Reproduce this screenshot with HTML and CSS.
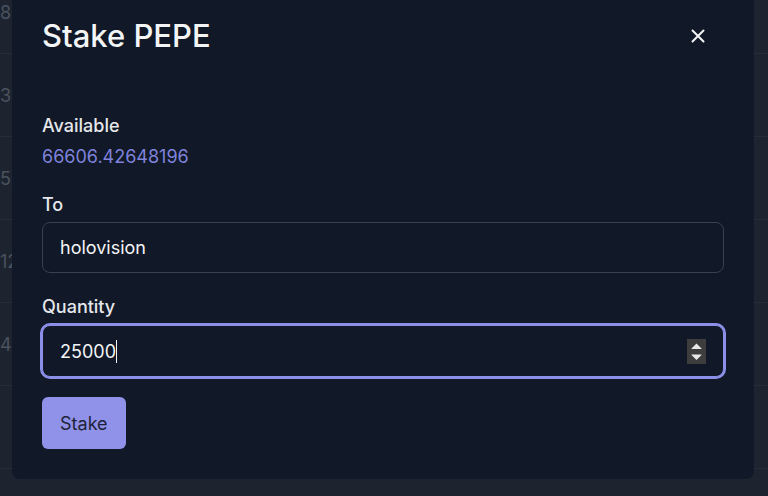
FILE: index.html
```html
<!DOCTYPE html>
<html lang="en">
<head>
  <meta charset="UTF-8">
  <meta name="viewport" content="width=device-width, initial-scale=1.0">
  <title>Stake PEPE</title>
  <link rel="stylesheet" href="styles.css">
</head>
<body>
  <div class="page">
    <div class="row"><span class="cell">8844</span></div>
    <div class="row"><span class="cell">3125</span></div>
    <div class="row"><span class="cell">5612</span></div>
    <div class="row"><span class="cell">1297</span></div>
    <div class="row"><span class="cell">4450</span></div>
    <div class="row"><span class="cell"></span></div>
  </div>

  <div class="modal">
    <div class="modal-header">
      <h2>Stake PEPE</h2>
      <button class="close" type="button" aria-label="Close">
        <svg width="14" height="14" viewBox="0 0 14 14">
          <path d="M1.5 1.5 L12.5 12.5 M12.5 1.5 L1.5 12.5" stroke="#f3f4f6" stroke-width="2" stroke-linecap="round"/>
        </svg>
      </button>
    </div>

    <form class="stake-form">
      <div class="field">
        <span class="label">Available</span>
        <div class="balance">66606.42648196</div>
      </div>
      <div class="field">
        <label class="label" for="to">To</label>
        <input class="input" id="to" type="text" value="holovision">
      </div>
      <div class="field">
        <label class="label" for="qty">Quantity</label>
        <div class="input input-focus number-box">
          <input class="number-input" id="qty" type="number" value="25000">
          <span class="caret"></span>
          <span class="spacer"></span>
          <svg class="spinner" width="19" height="25" viewBox="0 0 19 25">
            <rect width="19" height="25" fill="#3d3d3d"/>
            <path d="M9.5 4.5 L14.5 9.5 L14.5 10 L4.5 10 L4.5 9.5 Z" fill="#e8e8e8"/>
            <path d="M4.5 15.5 L14.5 15.5 L14.5 16 L9.5 21 L4.5 16 Z" fill="#e8e8e8"/>
          </svg>
        </div>
      </div>
      <div>
        <button class="btn" type="submit">Stake</button>
      </div>
    </form>
  </div>
</body>
</html>
```

FILE: styles.css
```css
html, body {
  height: 100%;
}
body {
  margin: 0;
  background-color: #1d2430;
  font-family: Inter, 'Noto Sans', sans-serif;
  overflow: hidden;
}
.page {
  margin-top: -29px;
}
.row {
  height: 82px;
  border-bottom: 1px solid #252d39;
  display: flex;
  align-items: center;
}
.cell {
  width: 22px;
  text-align: right;
  font-size: 18px;
  color: #4a525e;
}
.modal {
  position: fixed;
  top: -10px;
  left: 12px;
  width: 682px;
  height: 431px;
  padding: 28px 30px 30px 30px;
  background-color: #111827;
  border-radius: 8px;
}
.modal-header {
  display: flex;
  justify-content: space-between;
  align-items: center;
  margin-bottom: 58px;
}
.modal-header h2 {
  margin: 0;
  font-size: 31px;
  line-height: 36px;
  font-weight: 500;
  color: #f3f4f6;
}
.close {
  background: none;
  border: none;
  padding: 0;
  width: 36px;
  height: 36px;
  margin-right: 8px;
  display: flex;
  align-items: center;
  justify-content: center;
  cursor: pointer;
}
.stake-form {
  display: flex;
  flex-direction: column;
  gap: 20px;
}
.field {
  display: flex;
  flex-direction: column;
}
.label {
  font-size: 18px;
  line-height: 28px;
  font-weight: 500;
  color: #e5e7eb;
  margin-bottom: 3px;
}
.balance {
  font-size: 18px;
  line-height: 28px;
  color: #7f83dc;
}
.input {
  box-sizing: border-box;
  height: 51px;
  width: 100%;
  padding: 0 17px;
  font-family: Inter, 'Noto Sans', sans-serif;
  font-size: 18px;
  color: #f3f4f6;
  background-color: #111827;
  border: 1px solid #374151;
  border-radius: 8px;
  outline: none;
}
.input-focus {
  margin-top: 1px;
  height: 52px;
  border-color: #8b8fe8;
  box-shadow: 0 0 0 2px #8b8fe8;
}
.number-box {
  display: flex;
  align-items: center;
}
.number-input {
  field-sizing: content;
  min-width: 1px;
  padding: 0;
  border: none;
  outline: none;
  background: transparent;
  font-family: Inter, 'Noto Sans', sans-serif;
  font-size: 18px;
  color: #f3f4f6;
  -moz-appearance: textfield;
}
.number-input::-webkit-inner-spin-button,
.number-input::-webkit-outer-spin-button {
  -webkit-appearance: none;
  margin: 0;
}
.caret {
  width: 1px;
  height: 23px;
  background-color: #f3f4f6;
}
.spacer {
  flex: 1;
}
.spinner {
  display: block;
}
.btn {
  height: 52px;
  padding: 0 18px;
  font-family: Inter, 'Noto Sans', sans-serif;
  font-size: 18px;
  color: #1e2237;
  background-color: #9092e9;
  border: none;
  border-radius: 6px;
  cursor: pointer;
}
.btn:hover {
  background-color: #8284e0;
}
```
